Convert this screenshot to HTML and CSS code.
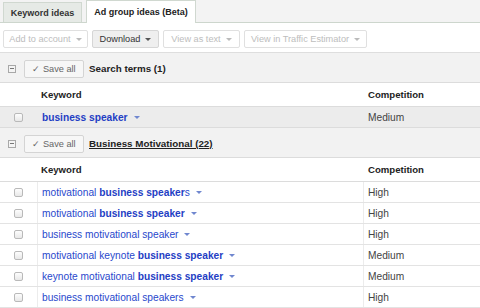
FILE: index.html
```html
<!DOCTYPE html>
<html>
<head>
<meta charset="utf-8">
<link rel="stylesheet" href="styles.css">
</head>
<body>
<div class="tabs">
  <div class="tab tab-keyword">Keyword ideas</div>
  <div class="tab tab-active">Ad group ideas (Beta)</div>
</div>
<div class="toolbar">
  <div class="btn btn-disabled btn-add">Add to account <span class="caret"></span></div>
  <div class="btn btn-on btn-download">Download <span class="caret"></span></div>
  <div class="btn btn-disabled btn-text">View as text <span class="caret"></span></div>
  <div class="btn btn-disabled btn-traffic">View in Traffic Estimator <span class="caret"></span></div>
</div>

<div class="group-head">
  <span class="collapse"></span>
  <span class="save">&#10003; Save all</span>
  <span class="title">Search terms (1)</span>
</div>
<div class="row row-head">
  <div class="c1"></div>
  <div class="c2">Keyword</div>
  <div class="c3">Competition</div>
</div>
<div class="row row-search">
  <div class="c1"><span class="cb"></span></div>
  <div class="c2"><span class="kw"><b>business speaker</b></span><span class="kcaret"></span></div>
  <div class="c3">Medium</div>
</div>

<div class="group-head">
  <span class="collapse"></span>
  <span class="save">&#10003; Save all</span>
  <span class="title title-u">Business Motivational (22)</span>
</div>
<div class="row row-head">
  <div class="c1"></div>
  <div class="c2">Keyword</div>
  <div class="c3">Competition</div>
</div>
<div class="row row-data">
  <div class="c1"><span class="cb"></span></div>
  <div class="c2"><span class="kw">motivational <b>business speaker</b>s</span><span class="kcaret"></span></div>
  <div class="c3">High</div>
</div>
<div class="row row-data">
  <div class="c1"><span class="cb"></span></div>
  <div class="c2"><span class="kw">motivational <b>business speaker</b></span><span class="kcaret"></span></div>
  <div class="c3">High</div>
</div>
<div class="row row-data">
  <div class="c1"><span class="cb"></span></div>
  <div class="c2"><span class="kw">business motivational speaker</span><span class="kcaret"></span></div>
  <div class="c3">High</div>
</div>
<div class="row row-data">
  <div class="c1"><span class="cb"></span></div>
  <div class="c2"><span class="kw">motivational keynote <b>business speaker</b></span><span class="kcaret"></span></div>
  <div class="c3">Medium</div>
</div>
<div class="row row-data">
  <div class="c1"><span class="cb"></span></div>
  <div class="c2"><span class="kw">keynote motivational <b>business speaker</b></span><span class="kcaret"></span></div>
  <div class="c3">Medium</div>
</div>
<div class="row row-data">
  <div class="c1"><span class="cb"></span></div>
  <div class="c2"><span class="kw">business motivational speakers</span><span class="kcaret"></span></div>
  <div class="c3">High</div>
</div>
</body>
</html>
```

FILE: styles.css
```css
* { box-sizing: border-box; }
html, body {
  margin: 0;
  padding: 0;
  background: #fff;
  font-family: "Liberation Sans", Arial, sans-serif;
  width: 480px;
  height: 308px;
  overflow: hidden;
}

.tabs {
  display: flex;
  align-items: flex-end;
  gap: 4px;
  height: 23px;
  padding-left: 3px;
  background: #f3f3f3;
  border-bottom: 1px solid #cdd6cd;
}
.tab {
  display: flex;
  align-items: center;
  justify-content: center;
  font-size: 9px;
  font-weight: bold;
  color: #333;
  border: 1px solid #d0d8d0;
  border-bottom: none;
}
.tab-keyword {
  width: 79px;
  height: 20px;
  background: #e6eae6;
}
.tab-active {
  width: 110px;
  height: 23px;
  margin-bottom: -1px;
  background: #fff;
  color: #222;
  padding-bottom: 1px;
}

.toolbar {
  display: flex;
  gap: 4px;
  height: 30px;
  padding: 7px 0 0 3px;
  border-bottom: 1px solid #dedede;
}
.btn {
  height: 18px;
  display: flex;
  align-items: center;
  justify-content: center;
  gap: 5px;
  font-size: 9.2px;
  border: 1px solid #e0e0e0;
  border-radius: 2px;
  background: #fff;
  color: #bdbdbd;
}
.btn-on {
  background: #efefef;
  border-color: #d6d6d6;
  color: #333;
}
.btn-add { width: 85px; }
.btn-download { width: 67px; }
.btn-text { width: 77px; }
.btn-traffic { width: 123px; }
.caret {
  width: 0;
  height: 0;
  border-left: 3px solid transparent;
  border-right: 3px solid transparent;
  border-top: 3px solid #bbb;
  margin-top: 1px;
}
.btn-on .caret { border-top-color: #555; }

.group-head {
  display: flex;
  align-items: center;
  height: 30px;
  padding: 2px 0 0 8px;
  background: #f2f2f2;
  border-bottom: 1px solid #dcdcdc;
}
.collapse {
  position: relative;
  width: 8px;
  height: 8px;
  border: 1px solid #a8a8a8;
  background: #f4f4f4;
  margin-right: 8px;
}
.collapse::after {
  content: "";
  position: absolute;
  left: 1px;
  right: 1px;
  top: 2px;
  height: 1px;
  background: #777;
}
.save {
  width: 60px;
  height: 18px;
  display: flex;
  align-items: center;
  justify-content: center;
  font-size: 9.2px;
  color: #666;
  background: #f7f7f7;
  border: 1px solid #d4d4d4;
  border-radius: 2px;
  margin-right: 5px;
}
.title {
  font-size: 9.8px;
  font-weight: bold;
  color: #222;
}
.title-u { text-decoration: underline; }

.row {
  display: grid;
  grid-template-columns: 37px 326px 1fr;
  height: 21px;
  border-bottom: 1px solid #e3e3e3;
  background: #fff;
}
.row > div {
  display: flex;
  align-items: center;
}
.row-head {
  height: 24px;
  font-size: 9.6px;
  font-weight: bold;
  color: #222;
  border-bottom-color: #dcdcdc;
}
.row-head .c2 { padding-left: 4px; }
.row-head .c3 { padding-left: 5px; }

.row-search {
  background: #ececec;
  border-bottom-color: #dcdcdc;
}
.row-search .c2, .row-data .c2 { padding-left: 5px; }
.row-search .c3, .row-data .c3 {
  padding-left: 5px;
  font-size: 10.2px;
  color: #444;
}
.row-data .c2 { border-left: 1px solid #ececec; padding-left: 4px; }
.row-data .c3 { border-left: 1px solid #ececec; padding-left: 4px; }

.c1 { padding-left: 14px; }
.cb {
  width: 9px;
  height: 9px;
  border: 1px solid #b9b9b9;
  border-radius: 2px;
  background: linear-gradient(#fdfdfd, #e8e8e8);
}
.kw {
  font-size: 10.2px;
  color: #2848cc;
}
.kw b { color: #1f3ec4; }
.kcaret {
  width: 0;
  height: 0;
  border-left: 3px solid transparent;
  border-right: 3px solid transparent;
  border-top: 3px solid #7087cf;
  margin-left: 6px;
  margin-top: 1px;
}
```
